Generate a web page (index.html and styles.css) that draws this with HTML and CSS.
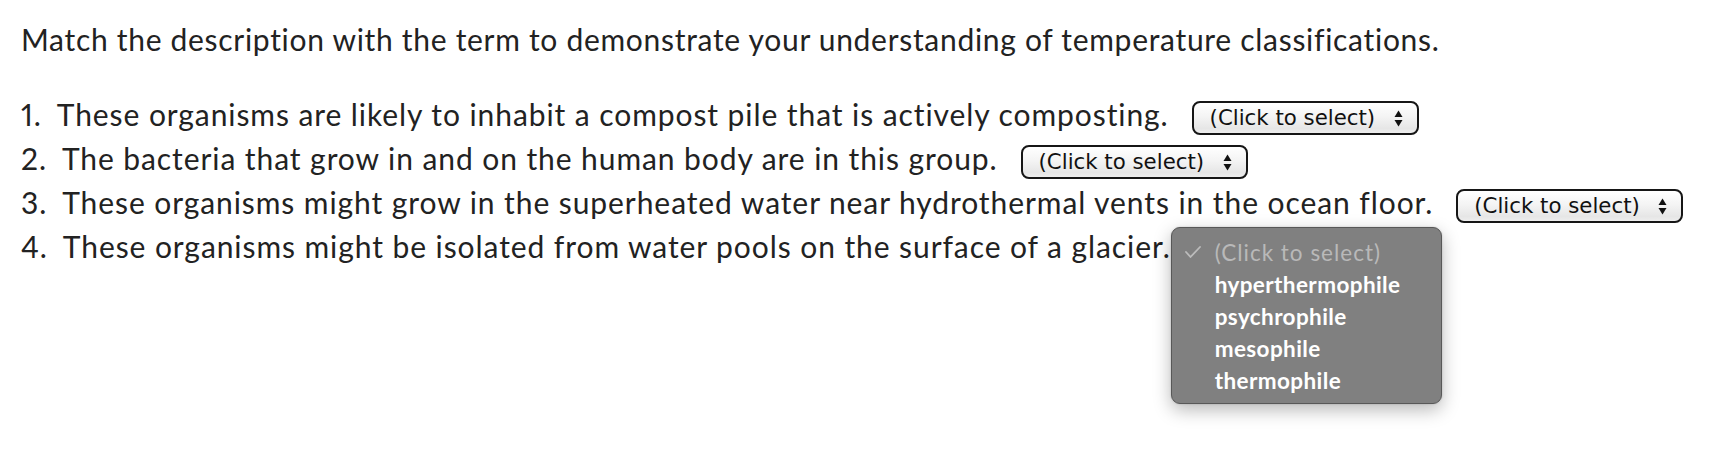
FILE: index.html
```html
<!DOCTYPE html>
<html lang="en">
<head>
<meta charset="utf-8">
<title>Temperature classifications</title>
<link rel="stylesheet" href="styles.css">
</head>
<body>
<main class="page">
  <p class="prompt">Match the description with the term to demonstrate your understanding of temperature classifications.</p>
  <ol class="items">
    <li class="item"><span class="num">1.</span><span class="desc">These organisms are likely to inhabit a compost pile that is actively composting.</span><span class="select"><span class="select-label">(Click to select)</span><svg class="arrows" width="9" height="17" viewBox="0 0 9 17"><polygon points="0.5,7 4.5,0.5 8.5,7"/><polygon points="0.5,10 4.5,16.5 8.5,10"/></svg></span></li>
    <li class="item"><span class="num">2.</span><span class="desc">The bacteria that grow in and on the human body are in this group.</span><span class="select"><span class="select-label">(Click to select)</span><svg class="arrows" width="9" height="17" viewBox="0 0 9 17"><polygon points="0.5,7 4.5,0.5 8.5,7"/><polygon points="0.5,10 4.5,16.5 8.5,10"/></svg></span></li>
    <li class="item"><span class="num">3.</span><span class="desc">These organisms might grow in the superheated water near hydrothermal vents in the ocean floor.</span><span class="select"><span class="select-label">(Click to select)</span><svg class="arrows" width="9" height="17" viewBox="0 0 9 17"><polygon points="0.5,7 4.5,0.5 8.5,7"/><polygon points="0.5,10 4.5,16.5 8.5,10"/></svg></span></li>
    <li class="item"><span class="num">4.</span><span class="desc">These organisms might be isolated from water pools on the surface of a glacier.</span><span class="select select-open"><span class="select-label">(Click to select)</span><svg class="arrows" width="9" height="17" viewBox="0 0 9 17"><polygon points="0.5,7 4.5,0.5 8.5,7"/><polygon points="0.5,10 4.5,16.5 8.5,10"/></svg><ul class="menu">
        <li class="option option-current"><svg class="check" width="16" height="12" viewBox="0 0 16 12"><polyline points="1,6 5.5,11 15,1"/></svg>(Click to select)</li>
        <li class="option">hyperthermophile</li>
        <li class="option">psychrophile</li>
        <li class="option">mesophile</li>
        <li class="option">thermophile</li>
      </ul></span></li>
  </ol>
</main>
</body>
</html>
```
FILE: styles.css
```css
html, body {
  margin: 0;
  padding: 0;
  background: #ffffff;
}

.page {
  box-sizing: border-box;
  min-height: 468px;
  padding: 19px 0 0 21px;
  font-family: "Lato", "Liberation Sans", sans-serif;
  font-size: 30px;
  color: #222222;
}

.prompt {
  margin: 0;
  line-height: 40px;
  letter-spacing: 0.7px;
  white-space: nowrap;
}

.items {
  list-style: none;
  margin: 33px 0 0 0;
  padding: 0;
  letter-spacing: 0.92px;
}

.item {
  line-height: 44px;
  height: 44px;
  white-space: nowrap;
}

.num {
  margin-right: 15px;
  font-variant-numeric: proportional-nums;
}

.select {
  position: relative;
  display: inline-flex;
  align-items: center;
  justify-content: space-between;
  box-sizing: border-box;
  width: 227px;
  height: 34px;
  margin-left: 23px;
  padding: 0 14px 0 16px;
  vertical-align: middle;
  border: 2px solid #161616;
  border-radius: 8px;
  background: linear-gradient(to bottom, #ffffff 0%, #f4f4f4 45%, #e6e6e6 85%, #ededed 100%);
  font-family: "DejaVu Sans", "Liberation Sans", sans-serif;
  font-size: 21.3px;
  letter-spacing: 0;
  line-height: 30px;
  color: #111111;
}

.select-open .select-label,
.select-open .arrows {
  visibility: hidden;
}

.arrows polygon {
  fill: #111111;
}

.menu {
  position: absolute;
  left: -25px;
  top: -8px;
  width: 271px;
  box-sizing: border-box;
  margin: 0;
  padding: 9px 0 6px 0;
  list-style: none;
  background: #808080;
  border: 1px solid #585858;
  border-radius: 9px;
  box-shadow: 0 6px 18px rgba(0, 0, 0, 0.28), 0 0 2px rgba(0, 0, 0, 0.2);
  font-family: "Lato", "Liberation Sans", sans-serif;
  font-size: 22.5px;
  font-weight: 700;
  letter-spacing: 0.4px;
  line-height: 32px;
  color: #ffffff;
  z-index: 2;
}

.option {
  position: relative;
  padding-left: 43px;
  height: 32px;
}

.option-current {
  color: #b9b9b9;
  font-weight: 400;
  letter-spacing: 1px;
}

.check {
  position: absolute;
  left: 13px;
  top: 9px;
}

.check polyline {
  fill: none;
  stroke: #bcbcbc;
  stroke-width: 1.8;
  stroke-linecap: round;
  stroke-linejoin: round;
}
```
